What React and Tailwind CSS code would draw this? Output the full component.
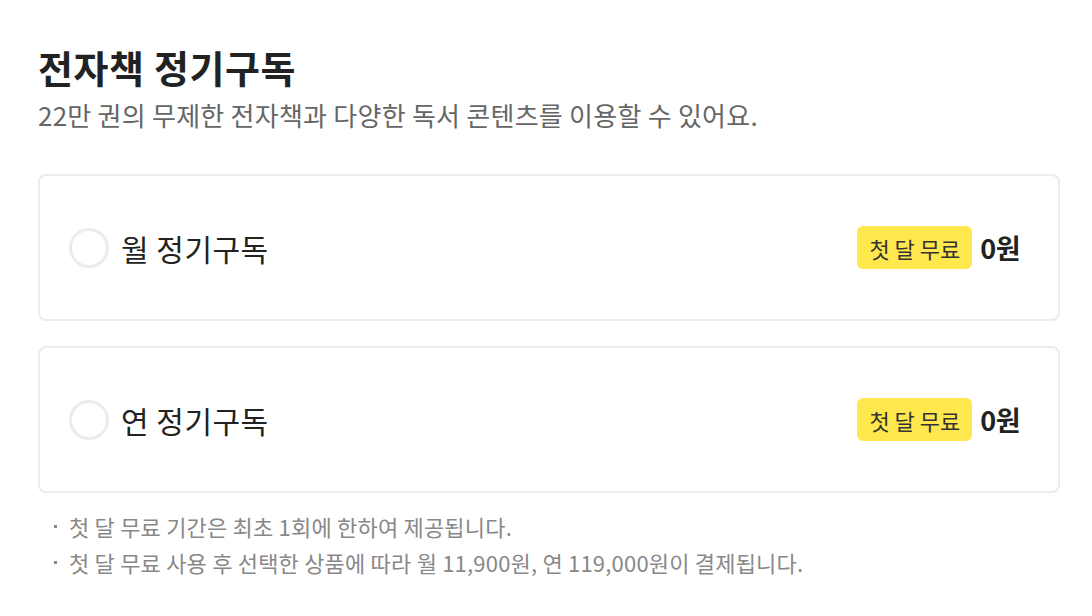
import React from "react";

const font = { fontFamily: '"Noto Sans CJK KR", "Noto Sans", sans-serif' };

function Plan({ label }) {
  return (
    <div className="flex h-[147px] items-center justify-between rounded-[8px] border-2 border-[#ececec] bg-white pl-[29px] pr-[38px]">
      <div className="flex items-center gap-[12px]">
        <div className="h-[40px] w-[40px] rounded-full border-[3px] border-[#ececec] bg-white" />
        <span className="text-[30px] leading-none tracking-[0.5px] text-[#222]">{label}</span>
      </div>
      <div className="flex items-center gap-[8px]">
        <span className="flex h-[43px] items-center rounded-[6px] bg-[#ffe84d] px-[12px] text-[22px] leading-none text-[#333]">
          첫 달 무료
        </span>
        <span className="text-[27px] font-bold leading-none tracking-[-0.5px] text-[#222]">0원</span>
      </div>
    </div>
  );
}

export default function App() {
  return (
    <div className="min-h-[616px] w-[1092px] bg-white pl-[38px] pr-[32px] pt-[38px]" style={font}>
      <h1 className="text-[38px] font-bold leading-[58px] tracking-[0.6px] text-[#222]">전자책 정기구독</h1>
      <p className="mt-[1px] text-[26px] leading-[36px] tracking-[0.25px] text-[#666]">
        22만 권의 무제한 전자책과 다양한 독서 콘텐츠를 이용할 수 있어요.
      </p>
      <div className="mt-[41px] flex flex-col gap-[25px]">
        <Plan label="월 정기구독" />
        <Plan label="연 정기구독" />
      </div>
      <ul className="mt-[15px] flex flex-col">
        {[
          "첫 달 무료 기간은 최초 1회에 한하여 제공됩니다.",
          "첫 달 무료 사용 후 선택한 상품에 따라 월 11,900원, 연 119,000원이 결제됩니다.",
        ].map((t) => (
          <li key={t} className="flex items-center gap-[12px] pl-[16px] text-[22px] leading-[36px] tracking-[0.2px] text-[#888]">
            <span className="h-[3px] w-[3px] bg-[#888]" />
            {t}
          </li>
        ))}
      </ul>
    </div>
  );
}
